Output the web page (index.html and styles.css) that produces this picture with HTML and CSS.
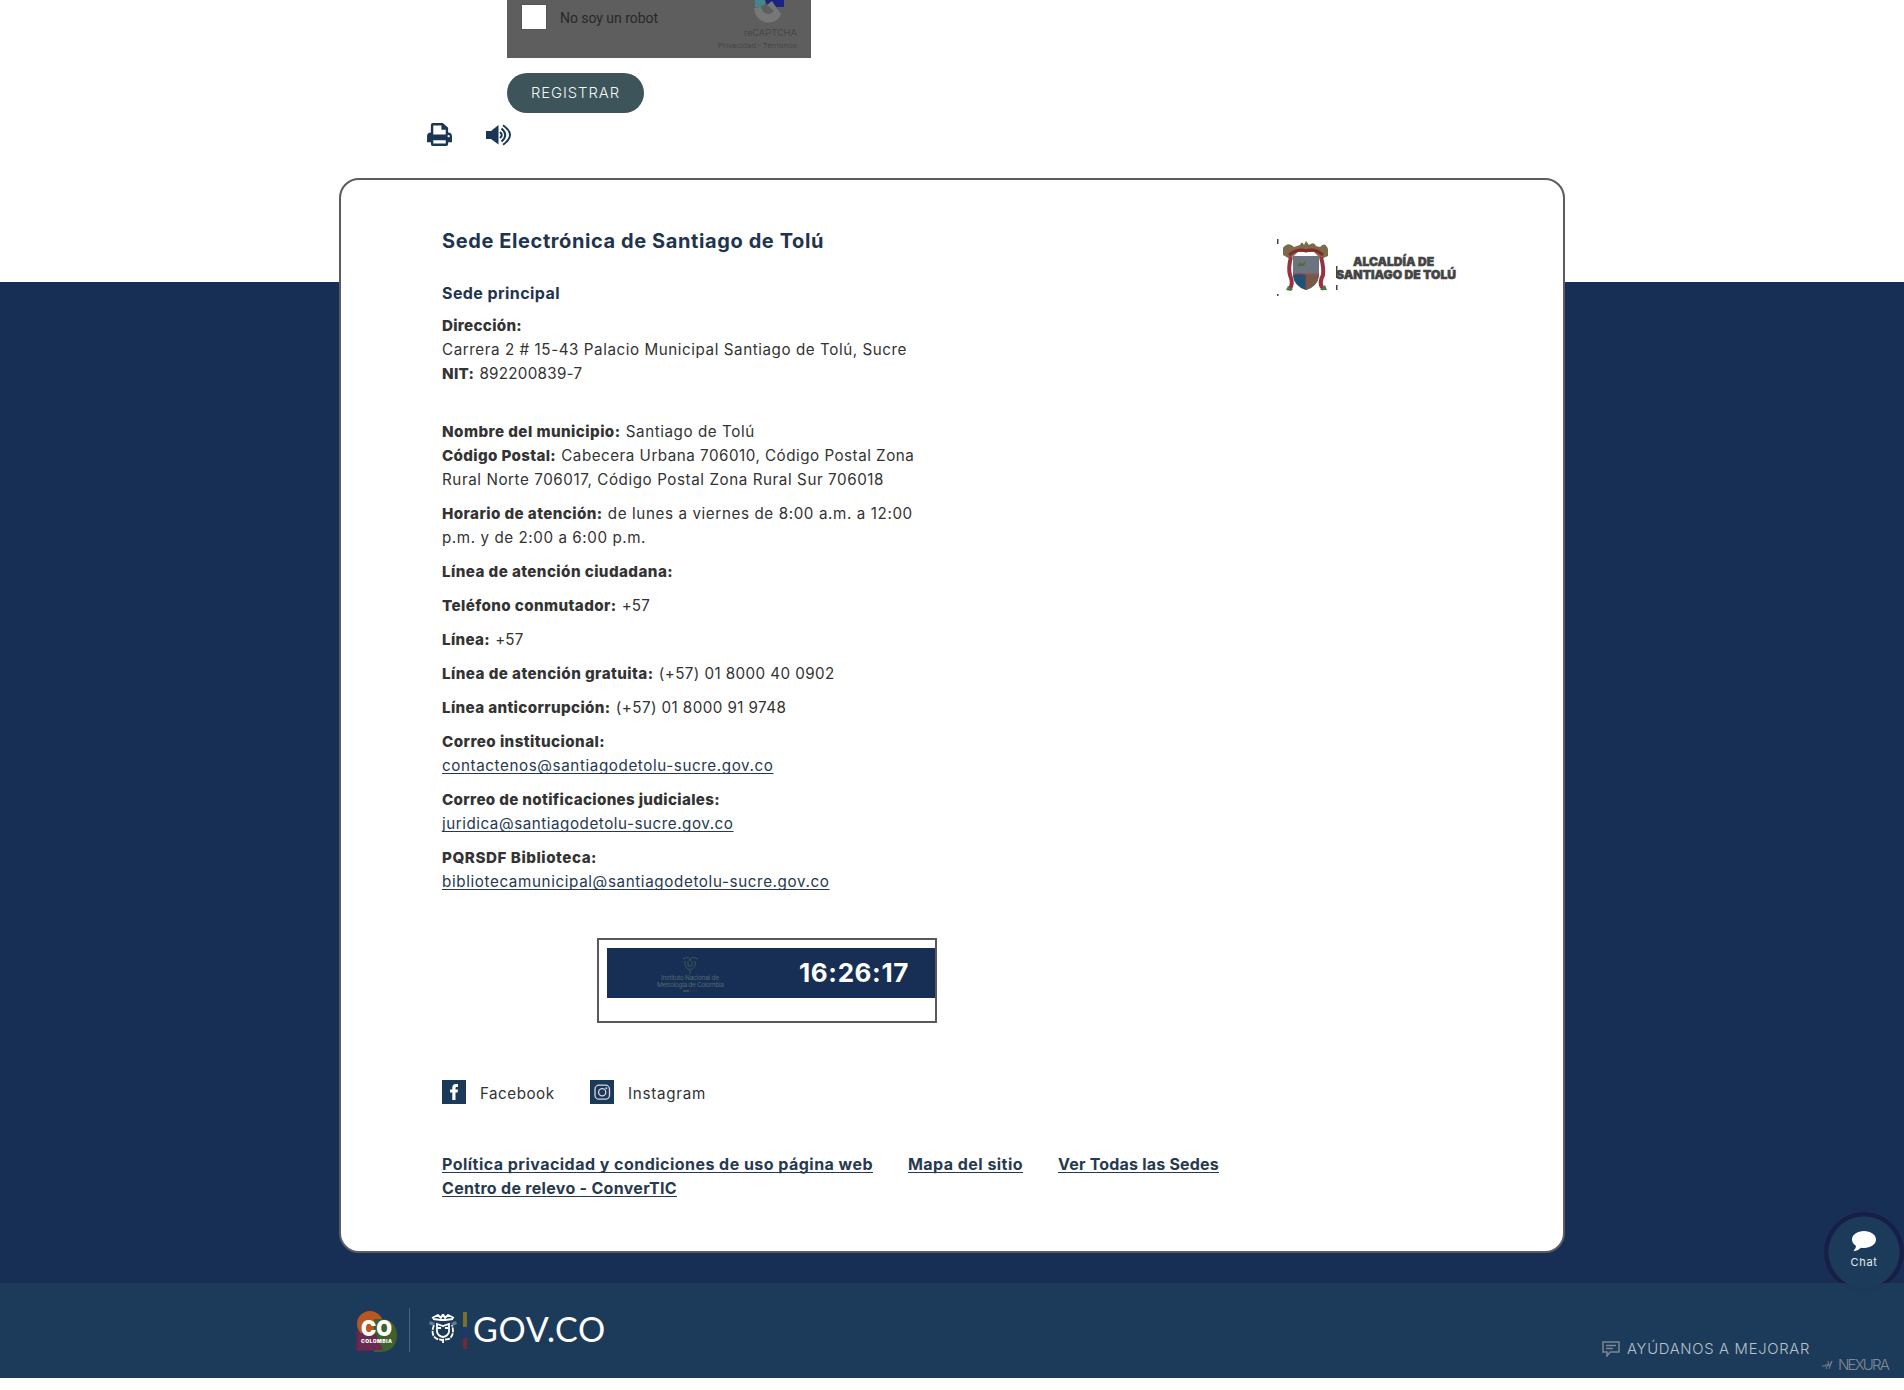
FILE: index.html
```html
<!DOCTYPE html>
<html lang="es">
<head>
<meta charset="utf-8">
<title>Alcaldía de Santiago de Tolú</title>
<link rel="stylesheet" href="styles.css">
</head>
<body>
<section class="form-end">
  <div class="captcha">
    <span class="checkbox"></span>
    <span class="captcha-label"><span data-w="98">No soy un robot</span></span>
    <div class="captcha-brand">
      <svg width="30" height="23" viewBox="0 0 30 23"><path d="M1 0H11V4L7 7H1Z" fill="#45868c"/><path d="M11 0H30V7H22L18 3L13 5Z" fill="#1c2384"/><path d="M0 8L7 7Q9 15 16 14L20 11L13 5L18 1L22 7L27 14L25 18Q19 24 11 22Q1 19 0 8Z" fill="#777"/></svg>
      <span class="captcha-name"><span data-w="53">reCAPTCHA</span></span>
      <span class="captcha-terms"><span data-w="79">Privacidad - Términos</span></span>
    </div>
  </div>
  <button class="register"><span data-w="89">REGISTRAR</span></button>
  <div class="tools">
    <svg width="25" height="23" viewBox="0 0 26 24"><path fill="#1b3554" fill-rule="evenodd" d="M4 10V2Q4 0 6 0H16.500L22 5V10Q26 10 26 14V20H22V22Q22 24 20 24H6Q4 24 4 22V20H0V14Q0 10 4 10ZM6.500 2.500V12H19.500V7H15V2.500ZM6.500 18V21.500H19.500V18ZM22.500 12.500A1.200 1.200 0 1 0 22.600 12.500Z"/></svg>
    <svg width="26" height="22" viewBox="0 0 26 22"><path fill="#1b3554" d="M0 7H5L12.500 1V20.500L5 15H0Z"/><g fill="none" stroke="#1b3554" stroke-width="2"><path d="M14 8Q17.500 11 14 14"/><path d="M15.500 4.500Q23 11 15.500 17.500"/><path d="M17 1.200Q31 11 17 20.800"/></g></svg>
  </div>
</section>

<section class="footer-area">
  <div class="card">
    <div class="card-head">
      <h2><span data-w="382">Sede Electrónica de Santiago de Tolú</span></h2>
      <svg class="city-logo" width="186" height="60" viewBox="0 0 186 60">
        <g fill="#444"><path d="M1 3h1.500v5H1zM60 30h1.500v12H60zM60 49h1.500v5H60zM1 58h1.500v3H1z"/></g>
        <path d="M7 12Q12 5 18 11L24 9Q26 4 28 9L30 5L33 9Q38 5 40 10L44 11Q49 5 52 13V20L45 23L38 16H22L14 23L7 19Z" fill="#7a6c49"/>
        <path d="M13 19Q22 12 30 15Q39 12 47 19" fill="none" stroke="#8b2732" stroke-width="3"/>
        <path d="M15 21Q12 32 14 39Q18 49 13 53M45 21Q48 32 47 39Q42 49 48 53" fill="none" stroke="#99323e" stroke-width="4"/>
        <path d="M17 20H43V40Q42 50 30 54Q18 50 17 40Z" fill="#6c7480"/>
        <path d="M17 39Q23 36 30 39V54Q18 50 17 39Z" fill="#205277"/>
        <path d="M30 39H43Q42 50 30 54Z" fill="#765947"/>
        <path d="M30 38V54M17 38H43" stroke="#9a4545"/>
        <path d="M21 30L24 26L26 28L30 25L28 30Z" fill="#5e6530"/>
        <path d="M12 50L17 53L15 55L10 54ZM44 54L49 49L51 54Z" fill="#49784e"/>
        <g class="logo-text"><text x="77" y="30" textLength="81" lengthAdjust="spacingAndGlyphs">ALCALDÍA DE</text><text x="60" y="43" textLength="120" lengthAdjust="spacingAndGlyphs">SANTIAGO DE TOLÚ</text></g>
      </svg>
    </div>
    <div class="info">
      <h3><span data-w="118">Sede principal</span></h3>
      <p><b data-w="80">Dirección:</b><br><span data-w="465">Carrera 2 # 15-43 Palacio Municipal Santiago de Tolú, Sucre</span><br><b data-w="32">NIT:</b> <span data-w="103">892200839-7</span></p>
      <p class="spaced"><b data-w="178.5">Nombre del municipio:</b> <span data-w="129">Santiago de Tolú</span><br><b data-w="114">Código Postal:</b> <span data-w="353">Cabecera Urbana 706010, Código Postal Zona</span><br><span data-w="442">Rural Norte 706017, Código Postal Zona Rural Sur 706018</span></p>
      <p><b data-w="160.5">Horario de atención:</b> <span data-w="305">de lunes a viernes de 8:00 a.m. a 12:00</span><br><span data-w="204">p.m. y de 2:00 a 6:00 p.m.</span></p>
      <p><b data-w="231">Línea de atención ciudadana:</b></p>
      <p><b data-w="174.5">Teléfono conmutador:</b> <span data-w="28">+57</span></p>
      <p><b data-w="48">Línea:</b> <span data-w="28">+57</span></p>
      <p><b data-w="211.5">Línea de atención gratuita:</b> <span data-w="176">(+57) 01 8000 40 0902</span></p>
      <p><b data-w="168.5">Línea anticorrupción:</b> <span data-w="170.5">(+57) 01 8000 91 9748</span></p>
      <p><b data-w="163">Correo institucional:</b><br><a data-w="331.5">contactenos@santiagodetolu-sucre.gov.co</a></p>
      <p><b data-w="278">Correo de notificaciones judiciales:</b><br><a data-w="291.5">juridica@santiagodetolu-sucre.gov.co</a></p>
      <p><b data-w="155">PQRSDF Biblioteca:</b><br><a data-w="387.5">bibliotecamunicipal@santiagodetolu-sucre.gov.co</a></p>
    </div>
    <div class="clock">
      <div class="clock-face">
        <svg class="inm" width="70" height="38" viewBox="0 0 70 38"><g fill="none" stroke="#3b5858"><path d="M27 4Q34 0 34 6Q35 0 42 4M29 6Q28 13 34 15Q41 12 39 6M32 6V11H36V6M34 15V19"/></g><g class="inm-text"><text x="5" y="25" textLength="58">Instituto Nacional de</text><text x="1" y="32" textLength="67">Metrología de Colombia</text></g><path d="M27 36H33" stroke="#6b6a43"/><path d="M33 36H41" stroke="#3d304c"/></svg>
        <span class="time"><span data-w="110">16:26:17</span></span>
      </div>
    </div>
    <div class="social">
      <a class="social-link"><svg width="24" height="24" viewBox="0 0 24 24"><path fill="#1b3959" d="M0 0H24V24H0Z"/><path fill="#fff" d="M10.300 20V12.500H8V9.500H10.300V7.500Q10.300 4 13.800 4H16V7H14.500Q13.500 7 13.500 8V9.500H16L15.600 12.500H13.500V20Z"/></svg><span data-w="74.5">Facebook</span></a>
      <a class="social-link"><svg width="24" height="24" viewBox="0 0 24 24"><path fill="#1b3959" d="M0 0H24V24H0Z"/><g fill="none" stroke="#d9d5e6" stroke-width="1.300"><rect x="5" y="5.200" width="14.500" height="14" rx="4"/><circle cx="12.200" cy="12.200" r="3.600"/></g><circle cx="16.300" cy="8.200" r="1" fill="#d9d5e6"/></svg><span data-w="78">Instagram</span></a>
    </div>
    <nav class="links">
      <a data-w="431">Política privacidad y condiciones de uso página web</a>
      <a data-w="115">Mapa del sitio</a>
      <a data-w="161">Ver Todas las Sedes</a>
      <a data-w="235">Centro de relevo - ConverTIC</a>
    </nav>
  </div>
</section>

<footer class="gov">
  <svg class="co" width="44" height="42" viewBox="0 0 44 42"><path d="M0 20H22V40H2Q0 40 0 38Z" fill="#642450"/><circle cx="14" cy="13" r="13" fill="#b85720"/><path d="M18 8H25Q41 9 41 25Q40 40 25 41H18Z" fill="#40602e"/><path d="M3 22L20 23L27 39H2Z" fill="#692b51"/><g class="co-text"><text x="5" y="24.500" font-size="22" textLength="31" lengthAdjust="spacingAndGlyphs">CO</text><text x="5" y="32" font-size="5" textLength="31">COLOMBIA</text></g></svg>
  <span class="rule"></span>
  <svg class="crest" width="28" height="30" viewBox="0 0 28 30"><g fill="none" stroke="#fff" stroke-width="1.800"><path d="M3 4L9 1L12 4L14 0L16 4L19 1L25 4M4 5L12 6H16L24 5"/><path d="M5 11Q1 21 8 25L13 26L20 25Q26 21 23 11" stroke-dasharray="5 1"/><path d="M8 10V18Q9 22 14 23Q19 22 20 18V10L14 12ZM9 14H12M16 14H19M14 25V29"/></g><path d="M1 7L6 9L4 12L0 10ZM27 7L22 9L24 12L28 10Z" fill="#657b8d"/></svg>
  <span class="flag"></span>
  <span class="gov-name"><span data-w="133">GOV.CO</span></span>
  <div class="help">
    <svg width="18" height="16" viewBox="0 0 18 16"><path d="M1 1H17V11H8L5 15V11H1Z" fill="none" stroke="#7b8792" stroke-width="1.500"/><path d="M4 4.500H14M4 7.500H11" stroke="#7b8792" stroke-width="1.300"/></svg>
    <span data-w="183">AYÚDANOS A MEJORAR</span>
  </div>
  <div class="nexura">
    <svg width="11" height="10" viewBox="0 0 11 10"><path d="M0 6H4V4M4 9L6 4M6 1L7 6L10 1L7 9" fill="none" stroke="#77828d"/></svg>
    <span data-w="50">NEXURA</span>
  </div>
</footer>

<div class="chat">
  <svg width="24" height="21" viewBox="0 0 24 21"><path fill="#fff" d="M12 0C18.600 0 24 3.600 24 8.500S18.600 17 12 17Q10.500 17 9 16.700Q6 19.800 2 20.300Q1.300 20 2 19.200Q4 17.500 4 15Q0 12.300 0 8.500C0 3.600 5.400 0 12 0Z"/></svg>
  <span data-w="27">Chat</span>
</div>
<script src="fit.js"></script>
</body>
</html>
```
FILE: styles.css
```css
* { box-sizing: border-box; }
body {
  margin: 0;
  padding-bottom: 12px;
  background: #fff;
  color: #333;
  font: 430 15.2px/24px Inter, "Noto Sans", sans-serif;
  overflow: hidden;
}
svg { display: block; flex: none; }
[data-w] { white-space: nowrap; }

.form-end { height: 178px; padding-left: 507px; }
.captcha {
  display: flex;
  width: 304px;
  height: 58px;
  padding-left: 14px;
  background: #5e5e5e;
  font-family: Roboto, sans-serif;
}
.checkbox { width: 26px; height: 26px; margin-top: 4px; border: 1px solid #555; background: #fff; }
.captcha-label { margin: 6px 0 0 13px; font-size: 14px; font-weight: 400; color: #282828; }
.captcha-brand {
  display: flex;
  flex-direction: column;
  align-items: flex-end;
  width: 140px;
  margin-left: auto;
  padding-right: 14px;
  color: #3b3b3b;
}
.captcha-brand svg { margin-right: 13px; }
.captcha-name { height: 18px; font-size: 9.5px; line-height: 20px; font-weight: 300; }
.captcha-terms { font-size: 8px; line-height: 9px; font-weight: 300; }
.register {
  display: block;
  width: 137px;
  height: 40px;
  margin-top: 15px;
  padding: 0;
  border: 0;
  border-radius: 20px;
  background: #3c545a;
  color: #f4f6f7;
  font: 300 14.8px/40px Inter, sans-serif;
}
.tools { display: flex; align-items: center; gap: 34px; margin: 10px 0 0 -80px; }

.footer-area {
  height: 1105px;
  background: linear-gradient(#fff 104px, #172f54 104px);
}
.card {
  width: 1226px;
  height: 1075px;
  margin: 0 auto;
  padding: 49px 101px 0;
  border: 2px solid #5c5a63;
  border-radius: 20px;
  background: #fff;
}
.card-head { display: flex; justify-content: space-between; height: 52px; }
h2, h3 { margin: 0; color: #20344f; font-weight: 650; }
h2 { font-size: 20px; line-height: 24px; }
h3 { height: 33px; font-size: 16px; }
.city-logo { margin: 7px 0 0; }
.logo-text { font: 900 12px Inter, sans-serif; fill: #444; stroke: #444; stroke-width: .5px; }
.info { width: 500px; }
.info p { margin: 0 0 10px; }
.info p.spaced { margin-top: 34px; }
.info b { margin-right: 1px; font-weight: 800; }
.info a, .links a {
  color: #26394f;
  text-decoration: underline;
  text-decoration-skip-ink: none;
  text-underline-offset: 2px;
}
.clock {
  width: 340px;
  height: 85px;
  margin: 44px 0 0 155px;
  padding: 8px 0 0 8px;
  border: 2px solid #59595d;
}
.clock-face {
  display: flex;
  justify-content: space-between;
  height: 50px;
  padding: 7px 26px 0 49px;
  background: #172f54;
}
.inm-text { font: 6.5px Inter, sans-serif; fill: #526773; }
.time { color: #fff; font-size: 26px; font-weight: 700; line-height: 36px; }
.social { display: flex; gap: 35.5px; margin-top: 57px; }
.social-link { display: flex; gap: 14px; line-height: 28px; height: 24px; }
.links {
  display: flex;
  flex-wrap: wrap;
  column-gap: 35px;
  width: 850px;
  margin-top: 48px;
  font-size: 16px;
  font-weight: 650;
}

.gov { display: flex; height: 95px; padding: 0 16px 0 356px; background: #1c3b5a; }
.co { margin-top: 28px; }
.co-text { font-family: Inter, sans-serif; font-weight: 900; fill: #fff; }
.rule { width: 1px; height: 44px; margin: 25px 20px 0 9px; background: #49647c; }
.crest { margin: 31px 0 0 -1px; }
.flag {
  width: 4px;
  height: 37px;
  margin: 29px 6px 0;
  background: linear-gradient(#79702b 15px, #21366e 15px 26px, #702a36 26px);
}
.gov-name { color: #fff; font: 400 34px/48px Lato, sans-serif; margin-top: 22px; }
.help {
  display: flex;
  gap: 7px;
  margin: 58px 0 0 auto;
  color: #b8c2ca;
  font-size: 14.8px;
  font-weight: 300;
  line-height: 17px;
}
.nexura {
  display: flex;
  align-items: center;
  gap: 5px;
  height: 14px;
  margin: 75px 0 0 12px;
  color: #808a94;
  font: 300 15px/14px Inter, sans-serif;
}
.chat {
  position: absolute;
  left: 1824px;
  top: 1212px;
  display: flex;
  flex-direction: column;
  align-items: center;
  width: 80px;
  height: 80px;
  padding-top: 19px;
  border-radius: 50%;
  background:
    radial-gradient(circle, #1c3b5a 35px, transparent 36px),
    linear-gradient(#171f49 71px, #1b3857 71px);
  color: #e5eaee;
  font-size: 11px;
  line-height: 20px;
}
```
FILE: fit.js
```js
document.querySelectorAll("[data-w]").forEach(function (el) {
  var natural = el.getBoundingClientRect().width;
  var spacing = (Number(el.dataset.w) - natural) / el.textContent.length;
  el.style.letterSpacing = spacing.toFixed(3) + "px";
});
```
